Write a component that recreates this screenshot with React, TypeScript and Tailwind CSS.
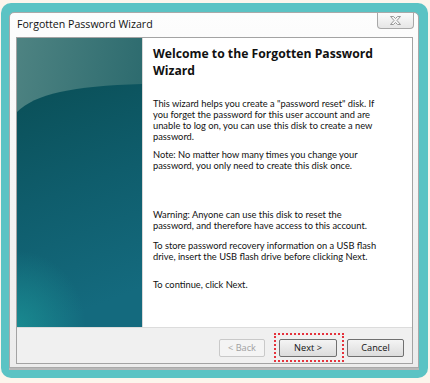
import React from "react";

const FONT = { fontFamily: '"Open Sans", "Noto Sans", Arial, sans-serif' };
const BODYFONT = { fontFamily: 'Lato, "Open Sans", Arial, sans-serif' };

function LeftPanel() {
  return (
    <svg width="125" height="289" viewBox="0 0 125 289" className="block">
      <defs>
        <linearGradient id="topg" x1="0" y1="0" x2="1" y2="0.4">
          <stop offset="0" stopColor="#4e8382" />
          <stop offset="1" stopColor="#2a696d" />
        </linearGradient>
        <linearGradient id="darkg" x1="0" y1="0" x2="0.2" y2="1">
          <stop offset="0" stopColor="#0a4f57" />
          <stop offset="0.5" stopColor="#0f5d6c" />
          <stop offset="1" stopColor="#146a7e" />
        </linearGradient>
        <radialGradient id="blob" cx="0" cy="1" r="0.55" gradientUnits="objectBoundingBox">
          <stop offset="0" stopColor="#1a8d92" stopOpacity="0.9" />
          <stop offset="1" stopColor="#1a8d92" stopOpacity="0" />
        </radialGradient>
      </defs>
      <rect width="125" height="289" fill="url(#topg)" />
      <path d="M0,74 C18,56 55,48 125,46 L125,289 L0,289 Z" fill="url(#darkg)" />
      <rect x="0" y="150" width="125" height="139" fill="url(#blob)" />
    </svg>
  );
}

function CloseGlyph() {
  return (
    <svg width="11" height="9" viewBox="0 0 11 9">
      <path
        d="M0.5,0.5 H3.5 L5.5,2.5 L7.5,0.5 H10.5 L7,4.5 L10.5,8.5 H7.5 L5.5,6.5 L3.5,8.5 H0.5 L4,4.5 Z"
        fill="#f4f4f4"
        stroke="#999999"
        strokeWidth="1"
      />
    </svg>
  );
}

export default function App() {
  const body = "text-[9.3px] leading-[11px] text-[#111] whitespace-nowrap";
  return (
    <div className="w-[430px] h-[383px] bg-[#fcf5ec] pt-[3px] pl-[1px]" style={FONT}>
      <div className="w-[427px] h-[375px] rounded-[10px] bg-[#5bc3c4] pt-[9px] pl-[8px]">
        <div className="w-[410px] h-[356px] rounded-t-[5px] border border-[#a9a9a9] bg-gradient-to-b from-[#fdfdfd] to-[#ececec] flex flex-col shadow-[0_2px_0_#b8b8b8]">
          {/* title bar */}
          <div className="h-[24px] flex items-start justify-between">
            <div className="pl-[7px] pt-[5px] text-[10.6px] leading-[13px] text-[#111]">
              Forgotten Password Wizard
            </div>
            <div className="mr-[4px] w-[37px] h-[16px] border border-t-0 border-[#a8a8a8] rounded-b-[4px] bg-gradient-to-b from-[#fbfbfb] to-[#e6e6e6] flex items-center justify-center">
              <CloseGlyph />
            </div>
          </div>
          {/* content */}
          <div className="ml-[6px] mr-[5px] h-[327px] border border-[#a3a3a3] flex flex-col">
            <div className="h-[289px] flex">
              <LeftPanel />
              <div className="flex-1 bg-white pl-[10px] pt-[7px] border-l border-[#d8d8d8]">
                <div className="text-[12.2px] leading-[17px] font-bold text-[#111] whitespace-nowrap">
                  <div>Welcome to the Forgotten Password</div>
                  <div>Wizard</div>
                </div>
                <div style={BODYFONT}>
                  <div className={body + " mt-[19px]"}>
                    <div>This wizard helps you create a "password reset" disk. If</div>
                    <div>you forget the password for this user account and are</div>
                    <div>unable to log on, you can use this disk to create a new</div>
                    <div>password.</div>
                  </div>
                  <div className={body + " mt-[7px]"}>
                    <div>Note: No matter how many times you change your</div>
                    <div>password, you only need to create this disk once.</div>
                  </div>
                  <div className={body + " mt-[38px]"}>
                    <div>Warning: Anyone can use this disk to reset the</div>
                    <div>password, and therefore have access to this account.</div>
                  </div>
                  <div className={body + " mt-[9px]"}>
                    <div>To store password recovery information on a USB flash</div>
                    <div>drive, insert the USB flash drive before clicking Next.</div>
                  </div>
                  <div className={body + " mt-[17px]"}>
                    <div>To continue, click Next.</div>
                  </div>
                </div>
              </div>
            </div>
            <div className="flex-1 bg-[#f0f0f0] border-t border-[#dcdcdc] flex items-start justify-end pt-[11px] pr-[8px]">
              <div className="w-[46px] h-[18px] border border-[#c9c9c9] rounded-[2px] bg-[#f4f4f4] flex items-center justify-center text-[9.2px] text-[#a0a0a0]">
                &lt; Back
              </div>
              <div className="relative ml-[14px]">
                <div className="w-[58px] h-[18px] border border-[#707070] rounded-[2px] bg-gradient-to-b from-[#f4f4f4] to-[#dcdcdc] flex items-center justify-center text-[9.2px] text-[#111]">
                  Next &gt;
                </div>
                <div className="absolute left-[-5px] top-[-6px] w-[70px] h-[29px] border-2 border-dotted border-[#e5323c]" />
              </div>
              <div className="ml-[10px] w-[57px] h-[18px] border border-[#707070] rounded-[2px] bg-gradient-to-b from-[#f4f4f4] to-[#dcdcdc] flex items-center justify-center text-[9.2px] text-[#111]">
                Cancel
              </div>
            </div>
          </div>
        </div>
      </div>
    </div>
  );
}
